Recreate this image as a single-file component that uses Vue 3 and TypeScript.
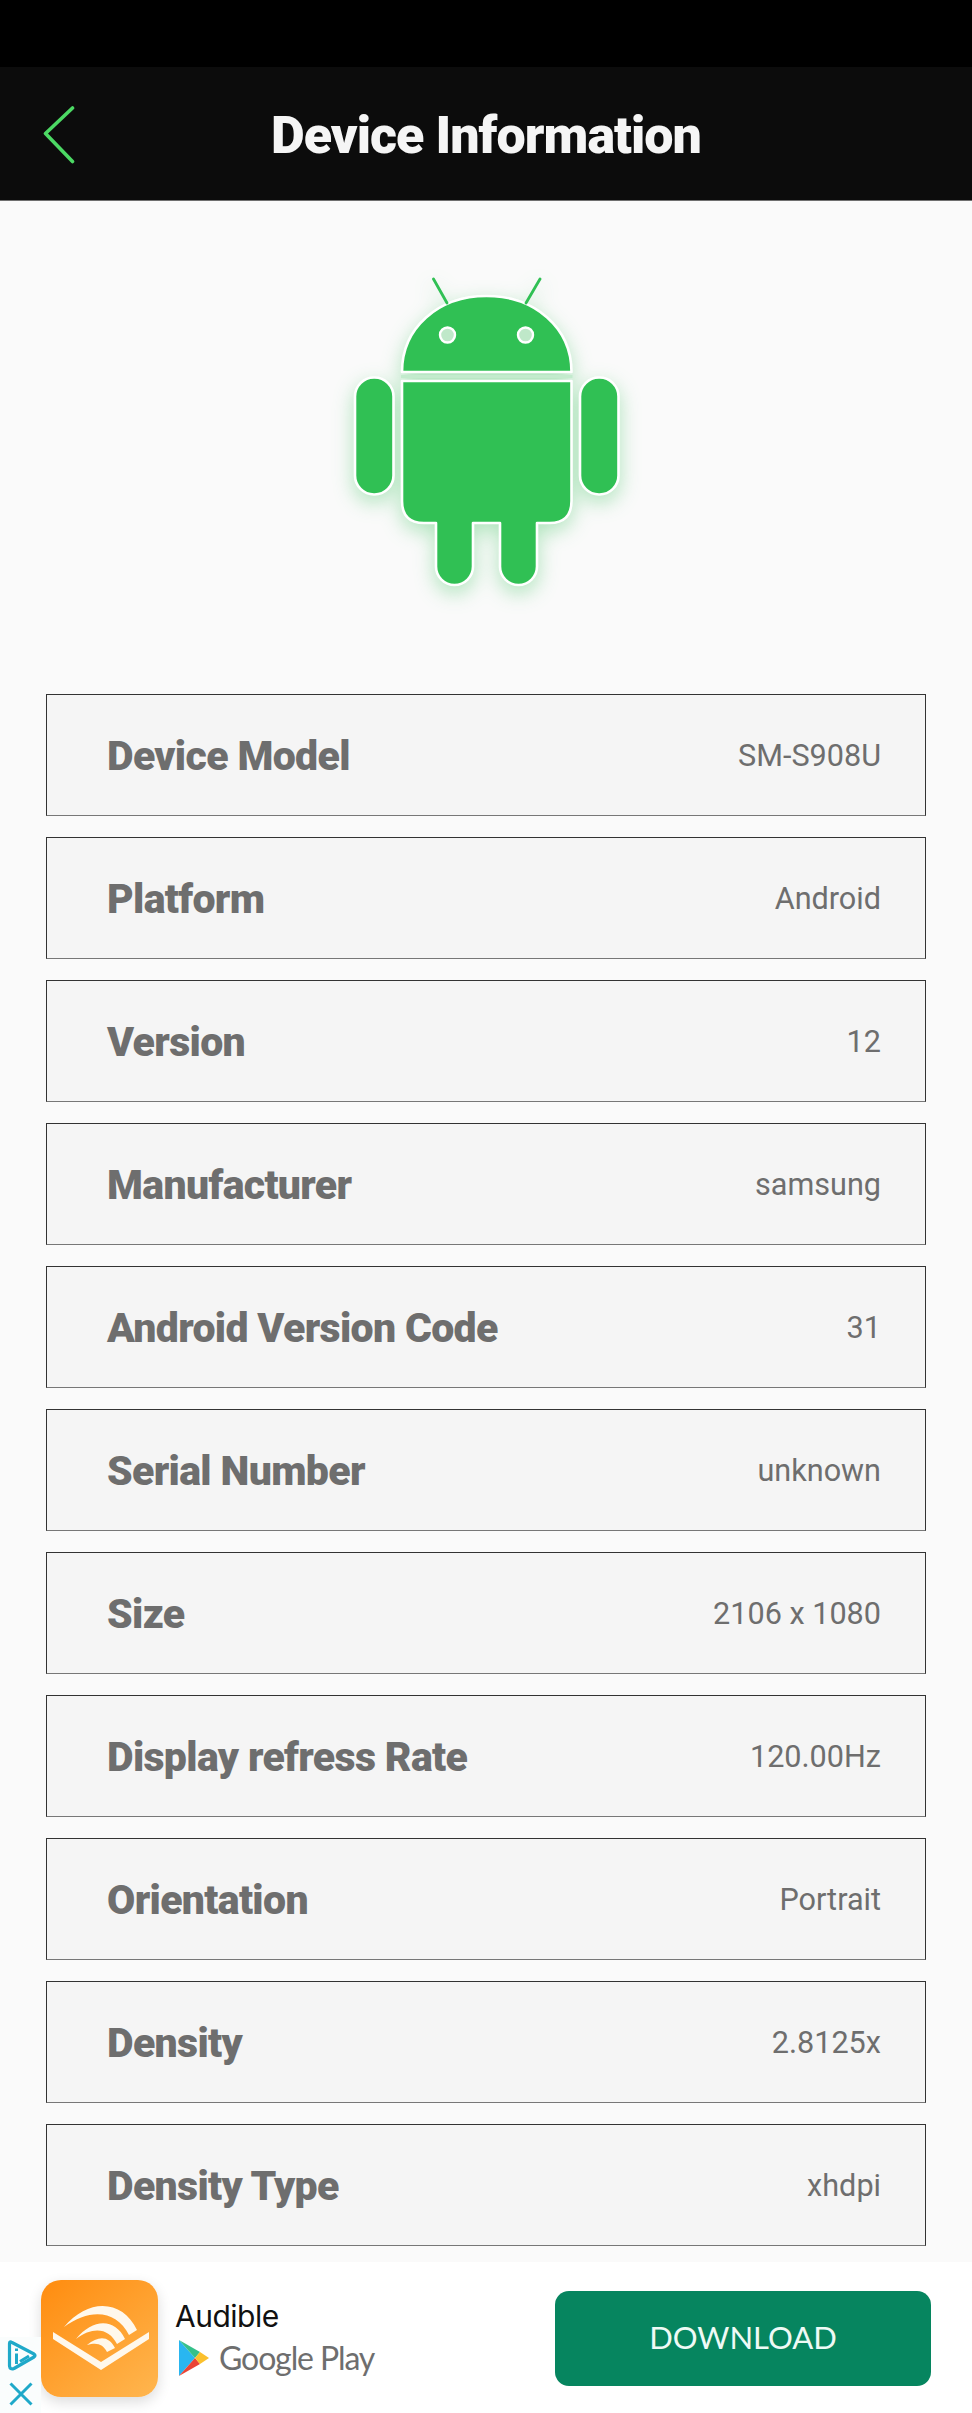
<script setup lang="ts">
interface Row { label: string; value: string }
const rows: Row[] = [
  { label: 'Device Model', value: 'SM-S908U' },
  { label: 'Platform', value: 'Android' },
  { label: 'Version', value: '12' },
  { label: 'Manufacturer', value: 'samsung' },
  { label: 'Android Version Code', value: '31' },
  { label: 'Serial Number', value: 'unknown' },
  { label: 'Size', value: '2106 x 1080' },
  { label: 'Display refress Rate', value: '120.00Hz' },
  { label: 'Orientation', value: 'Portrait' },
  { label: 'Density', value: '2.8125x' },
  { label: 'Density Type', value: 'xhdpi' },
]
</script>

<template>
  <div class="screen">
    <div class="status"></div>
    <header class="header">
      <svg class="back" width="32" height="58" viewBox="0 0 32 58" fill="none">
        <path d="M29.500 2 2.500 27.500 29.500 55.500" stroke="#4cd964" stroke-width="3.600" stroke-linecap="round" stroke-linejoin="round" />
      </svg>
      <h1 class="title">Device Information</h1>
    </header>
    <main class="main">
      <svg class="android" width="330" height="370" viewBox="321 250 330 370">
        <g fill="#30c054" stroke="#fff" stroke-width="2.600" stroke-linejoin="round">
          <path d="M402 372 C402 328 438 296 486.500 296 C535 296 571.500 328 571.500 372 Z" />
          <path d="M402 381 H571.500 V501 Q571.500 523 549.500 523 H537 V566.500 A18.500 18.500 0 0 1 500 566.500 V523 H473 V566.500 A18.500 18.500 0 0 1 436 566.500 V523 H424 Q402 523 402 501 Z" />
          <rect x="355" y="377.500" width="38.500" height="117" rx="19" />
          <rect x="580" y="377.500" width="38.500" height="117" rx="19" />
        </g>
        <path d="M401 376.500 H572.500" stroke="#c3ebcd" stroke-width="3" />
        <path d="M447 303 L433.500 279 M526 303 L540 279" stroke="#30c054" stroke-width="2.800" stroke-linecap="round" />
        <circle cx="447.500" cy="335" r="7.500" fill="#bfe8c9" stroke="#fff" stroke-width="2.400" />
        <circle cx="525.500" cy="335" r="7.500" fill="#bfe8c9" stroke="#fff" stroke-width="2.400" />
      </svg>
      <ul class="rows">
        <li v-for="row in rows" :key="row.label" class="row">
          <span class="label">{{ row.label }}</span>
          <span class="value">{{ row.value }}</span>
        </li>
      </ul>
    </main>
    <footer class="ad">
      <div class="adchoice">
        <svg class="ad-i" width="30" height="31" viewBox="0 0 30 31" fill="none">
          <path d="M2.500 3.500 Q2.500 1 5 2.500 L27 14 Q29 15.500 27 17 L7 28.500 Q3 30 2.500 26 Z" stroke="#1fa9c9" stroke-width="3.200" stroke-linejoin="round" />
          <path d="M9.500 13.500 V24 M9.500 8.500 V11 M13 21.500 L22 16" stroke="#1fa9c9" stroke-width="3" />
        </svg>
        <svg width="24" height="24" viewBox="0 0 24 24" fill="none">
          <path d="M1.500 1.500 L22.500 22.500 M22.500 1.500 L1.500 22.500" stroke="#1fa9c9" stroke-width="3" />
        </svg>
      </div>
      <div class="app-icon">
        <svg width="117" height="117" viewBox="0 0 117 117">
          <path d="M12 52 L60 82 L108 52 L108 59 L60 90 L12 59 Z" fill="#fff8ec" />
          <path d="M23 47 C48 17 82 20 96 50 L88 55 C76 31 50 27 23 47 Z" fill="#fff8ec" />
          <path d="M35 59 C52 38 74 38 84 59 L76 64 C68 48 52 46 35 59 Z" fill="#fff8ec" />
          <path d="M46 65 C58 55 68 56 74 68 L66 72 C62 64 56 62 46 65 Z" fill="#fff8ec" />
        </svg>
      </div>
      <div class="app-info">
        <div class="app-name">Audible</div>
        <div class="store">
          <svg width="30" height="36" viewBox="0 0 30 36">
            <path d="M0 0 V36 L16 18 Z" fill="#29b6f0" />
            <path d="M0 0 L21 12 L16 18 Z" fill="#36c08a" />
            <path d="M0 36 L21 24 L16 18 Z" fill="#ea4435" />
            <path d="M21 12 L30 18 L21 24 L16 18 Z" fill="#fbc02d" />
          </svg>
          <span class="store-name">Google Play</span>
        </div>
      </div>
      <button class="download" type="button">DOWNLOAD</button>
    </footer>
  </div>
</template>

<style>
html, body { margin: 0; padding: 0; background: #fafafa; }
</style>

<style scoped>
.screen {
  width: 972px;
  height: 2413px;
  display: flex;
  flex-direction: column;
  overflow: hidden;
  background: #fafafa;
  font-family: Roboto, "Liberation Sans", sans-serif;
}
.status { height: 67px; background: #000; flex: none; }
.header {
  flex: none;
  height: 133px;
  border-bottom: 1px solid #6f6f6f;
  background: #0c0c0c;
  display: flex;
  align-items: center;
  justify-content: center;
  position: relative;
}
.back { position: absolute; left: 43px; top: 39px; }
.title {
  margin: 0;
  padding-top: 4px;
  color: #f5f5f5;
  font-size: 52px;
  font-weight: 900;
  letter-spacing: -0.95px;
  line-height: 1;
}
.main { flex: 1; min-height: 0; display: flex; flex-direction: column; align-items: center; }
.android {
  flex: none;
  margin-top: 49px;
  filter: drop-shadow(0 7px 10px rgba(48, 192, 84, 0.36));
}
.rows {
  list-style: none;
  margin: 74px 0 0;
  padding: 0;
  width: 880px;
  display: flex;
  flex-direction: column;
  gap: 21px;
}
.row {
  box-sizing: border-box;
  height: 122px;
  display: flex;
  align-items: center;
  justify-content: space-between;
  padding: 1px 44px 0 60px;
  background: #f5f5f5;
  border: 1.5px solid #333;
  border-bottom-color: #777;
}
.label {
  color: #6e6e6e;
  font-size: 41px;
  font-weight: 900;
  letter-spacing: -0.65px;
}
.value {
  color: #6e6e6e;
  font-size: 30.6px;
  font-weight: 400;
}
.ad {
  flex: none;
  height: 151px;
  background: #fff;
  display: flex;
  position: relative;
}
.adchoice {
  position: absolute;
  left: 0;
  bottom: 0;
  width: 41px;
  height: 76px;
  background: #fafdfd;
  display: flex;
  flex-direction: column;
  align-items: center;
  gap: 11px;
  padding-top: 3px;
  box-sizing: border-box;
}
.ad-i { margin-left: 3px; }
.app-icon {
  margin: 18px 0 0 41px;
  width: 117px;
  height: 117px;
  border-radius: 20px;
  background: linear-gradient(140deg, #ff8c0f 0%, #ffb64f 100%);
  box-shadow: 0 5px 14px rgba(0, 0, 0, 0.14);
}
.app-info { margin: 36px 0 0 17px; }
.app-name {
  font-family: Inter, sans-serif;
  font-size: 30px;
  line-height: 36px;
  letter-spacing: -0.5px;
  color: #111;
}
.store { display: flex; align-items: center; gap: 10px; margin: 6px 0 0 4px; }
.store-name {
  font-family: Lato, sans-serif;
  font-size: 32px;
  line-height: 36px;
  letter-spacing: -1.1px;
  color: #6e6e6e;
}
.download {
  position: absolute;
  left: 555px;
  top: 29px;
  width: 376px;
  height: 95px;
  border: 0;
  border-radius: 14px;
  background: #06855f;
  color: #eefaf5;
  font-family: Lato, sans-serif;
  font-size: 31px;
  font-weight: 400;
  padding: 0 0 3px;
}
</style>
